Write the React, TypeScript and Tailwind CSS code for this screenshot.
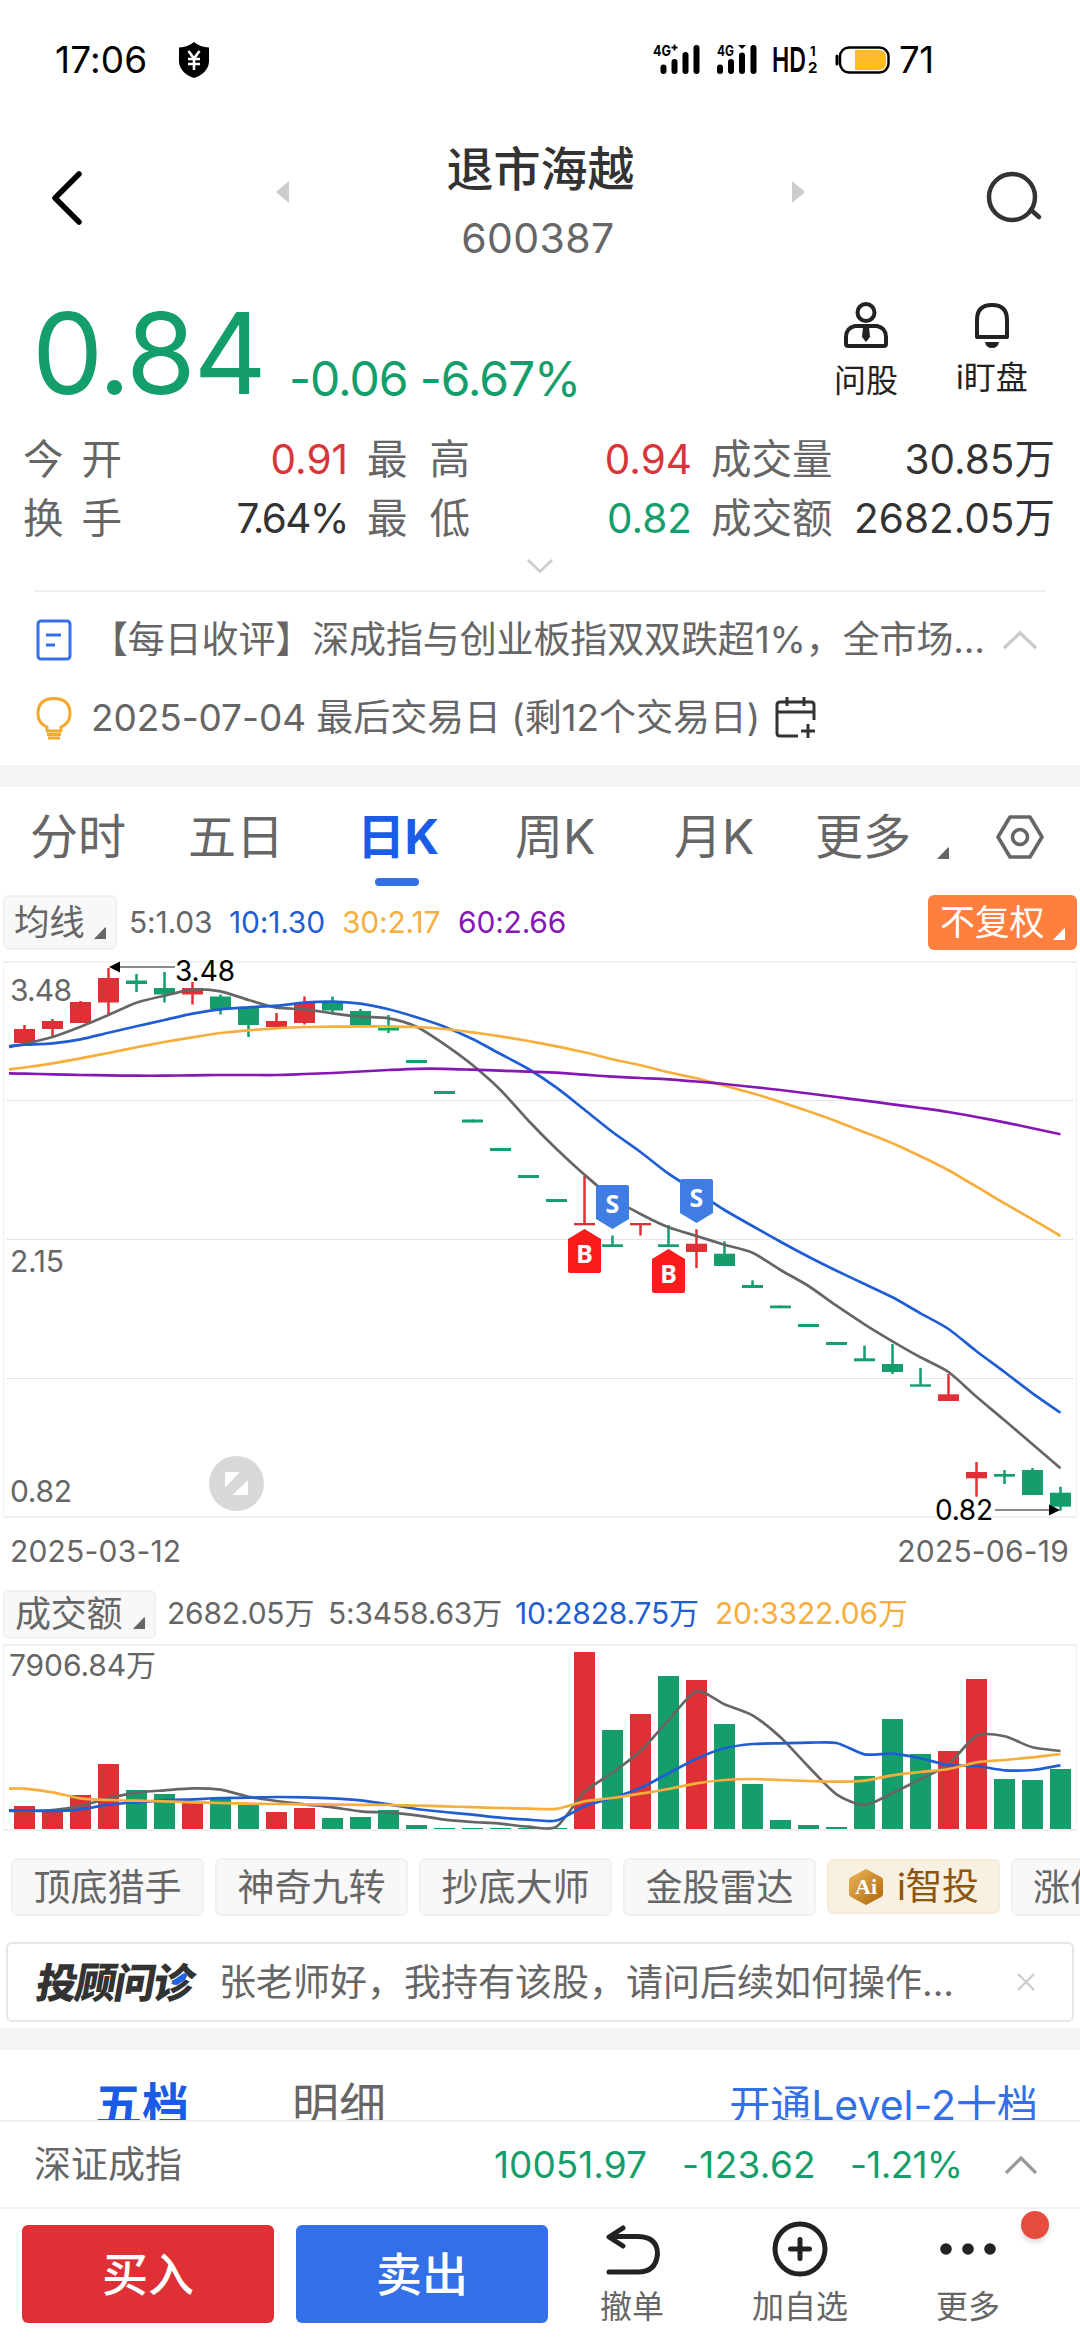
import React from "react";

const RED = "#df3135";
const GREEN = "#149e6b";

type Candle = { up: boolean; hi: number; top: number; bottom: number; lo: number; vol: number };

// [direction, high, body top, body bottom, low, volume top]
const raw: [string, number, number, number, number, number][] = [
    ["r", 1025, 1029, 1043, 1043, 1806],
    ["r", 1019, 1021, 1029, 1037, 1812],
    ["r", 1001, 1002, 1023, 1023, 1795],
    ["r", 968, 978, 1002.5, 1014, 1764],
    ["g", 974, 980.5, 984, 992, 1790],
    ["g", 972, 988, 994.5, 1002.5, 1794],
    ["r", 982, 988, 994.5, 1004.5, 1802],
    ["g", 994.5, 996.5, 1009, 1014.5, 1799],
    ["g", 1007, 1008, 1025, 1037, 1805],
    ["r", 1013, 1021, 1027, 1027, 1812],
    ["r", 996.5, 1003, 1023, 1024.5, 1808],
    ["g", 996.5, 1003, 1010.5, 1012.5, 1818],
    ["g", 1009, 1011, 1025, 1025, 1817],
    ["g", 1015, 1028, 1030.5, 1033, 1810],
    ["g", 1060, 1060, 1063, 1063, 1825],
    ["g", 1091, 1091, 1094, 1094, 1828],
    ["g", 1119.5, 1119.5, 1122.5, 1122.5, 1828],
    ["g", 1148, 1148, 1151, 1151, 1828],
    ["g", 1175, 1175, 1178, 1178, 1828],
    ["g", 1199, 1199, 1202, 1202, 1828],
    ["r", 1176, 1223, 1225.3, 1225, 1652],
    ["g", 1235.5, 1244.3, 1247, 1247, 1730],
    ["r", 1223, 1223, 1225.3, 1235.5, 1714],
    ["g", 1225, 1244.3, 1247, 1247, 1676],
    ["r", 1229.3, 1243.7, 1252, 1268, 1680],
    ["g", 1241.3, 1253.7, 1266, 1266, 1724],
    ["g", 1280.3, 1285, 1288, 1288, 1784],
    ["g", 1305.5, 1305.5, 1308.3, 1308, 1820],
    ["g", 1324, 1324, 1327, 1327, 1825],
    ["g", 1342, 1342, 1345, 1345, 1827],
    ["g", 1345.7, 1358.3, 1361.3, 1361, 1776],
    ["g", 1344, 1364, 1372, 1374, 1719],
    ["g", 1368, 1384.3, 1386.7, 1386, 1754],
    ["r", 1374, 1394.3, 1401, 1401, 1751],
    ["r", 1462, 1472, 1478.3, 1496.7, 1679],
    ["g", 1470, 1474, 1476.7, 1484, 1779],
    ["g", 1468, 1470, 1495, 1495, 1780],
    ["g", 1486.7, 1492.7, 1506.7, 1510.7, 1769],
];

const candles: Candle[] = raw.map(([d, hi, top, bottom, lo, vol]) => ({ up: d === "r", hi, top, bottom, lo, vol }));

const cx = (i: number) => 24.5 + i * 28;

const ma5 = [1044, 1037, 1026.7, 1015, 1002.7, 995.7, 989.7, 991.3, 1000, 1007.7, 1009.3, 1013.3, 1016.7, 1018.3, 1026.7, 1044.3, 1065, 1090, 1120.7, 1149, 1174.7, 1198, 1214, 1227.3, 1236, 1244.7, 1252.7, 1270, 1286, 1305.7, 1324.3, 1341.3, 1357.3, 1372, 1396.7, 1420.3, 1444.3, 1468.3];
const ma10 = [1044.7, 1043.3, 1039.3, 1032.7, 1026.3, 1020, 1013.7, 1009.3, 1007.3, 1005.7, 1002.7, 1001.7, 1003.7, 1009.3, 1017.3, 1026.7, 1039, 1054, 1069, 1087.7, 1109.7, 1132, 1152, 1173.7, 1191.7, 1210, 1226, 1241.7, 1256.7, 1270.7, 1284, 1297.3, 1313.3, 1329, 1351.3, 1372, 1393.3, 1412.7];
const ma30 = [1067.5, 1063.3, 1058.3, 1053, 1047.3, 1042, 1037.3, 1033, 1030.3, 1028.3, 1027, 1026.7, 1026.4, 1026.5, 1027, 1029, 1032.3, 1036.3, 1041, 1046.3, 1052.3, 1059.3, 1065.3, 1072.3, 1078.3, 1085.7, 1093.3, 1102, 1111.3, 1121.3, 1132.3, 1143.3, 1156.3, 1170.3, 1186.7, 1203.3, 1219.3, 1236];
const ma60 = [1073.7, 1074.3, 1075, 1075.4, 1075.7, 1075.7, 1075.3, 1075, 1075, 1075, 1074, 1073, 1071.5, 1070, 1068.8, 1068.8, 1069.7, 1070.7, 1071.7, 1072.7, 1074.7, 1076.7, 1078, 1079.3, 1081.5, 1084, 1087, 1090, 1093.5, 1097, 1100.6, 1104.3, 1108, 1112, 1117, 1122.3, 1128.2, 1134.3];

const vol5 = [1811, 1810, 1806, 1798.3, 1792.7, 1790.3, 1788.3, 1789.7, 1796.7, 1801, 1804.3, 1807.3, 1811.3, 1812.7, 1815.3, 1819.7, 1822, 1823.7, 1826.7, 1826.6, 1792, 1772.7, 1751, 1720.3, 1691.3, 1704.3, 1715.3, 1737.3, 1766.7, 1794.3, 1805, 1793, 1779.3, 1764.3, 1735.7, 1736.3, 1747.3, 1751];
const vol10 = [1810.4, 1811, 1809.3, 1804.7, 1802.3, 1800.3, 1799.3, 1798, 1797.7, 1797, 1797.3, 1798.3, 1800.3, 1804.3, 1809, 1812, 1814.7, 1817.7, 1819.7, 1820.5, 1806.3, 1798, 1788, 1773.3, 1758.7, 1748.3, 1744, 1743.3, 1742.7, 1743, 1754.3, 1753.7, 1758.3, 1765, 1766, 1770.3, 1770, 1765.3];
const vol20 = [1788.7, 1792.3, 1798.3, 1800, 1800.7, 1801.3, 1802.3, 1803, 1803.7, 1804, 1804.3, 1804.6, 1804.8, 1805, 1805.6, 1806.3, 1807.2, 1808, 1808.6, 1808.8, 1801.3, 1798, 1793.7, 1789, 1783.3, 1780, 1779, 1780, 1781, 1781.7, 1780.7, 1775.3, 1772, 1769, 1762.3, 1760, 1757.3, 1754];

// Catmull-Rom through the candle centres, with a short lead-in at the left edge
function linePath(ys: number[], startY: number) {
    const pts = [[9, startY], ...ys.map((y, i) => [cx(i), y])];
    let d = `M${pts[0][0]} ${pts[0][1]}`;
    for (let i = 0; i < pts.length - 1; i++) {
        const p0 = pts[Math.max(i - 1, 0)];
        const p1 = pts[i];
        const p2 = pts[i + 1];
        const p3 = pts[Math.min(i + 2, pts.length - 1)];
        d += `C${p1[0] + (p2[0] - p0[0]) / 8} ${p1[1] + (p2[1] - p0[1]) / 8} ${p2[0] - (p3[0] - p1[0]) / 8} ${p2[1] - (p3[1] - p1[1]) / 8} ${p2[0]} ${p2[1]}`;
    }
    return d;
}

function Line({ ys, start, color }: { ys: number[]; start: number; color: string }) {
    return <path d={linePath(ys, start)} fill="none" stroke={color} strokeWidth="2.7" strokeLinejoin="round" />;
}

function Corner({ className = "" }: { className?: string }) {
    return (
        <svg width="12" height="12" viewBox="0 0 12 12" className={className}>
            <path d="M12 1V12H0.5Q0 12 0.4 11.4L11 0.5Q12 0 12 1Z" fill="currentColor" />
        </svg>
    );
}

function TradeMark({ x, y, side }: { x: number; y: number; side: "B" | "S" }) {
    const buy = side === "B";
    return (
        <g transform={`translate(${x} ${y})`}>
            <path
                d={buy ? "M16.5 0L33 10V42Q33 44 31 44H2Q0 44 0 42V10Z" : "M2 0H31Q33 0 33 2V34L16.5 44L0 34V2Q0 0 2 0Z"}
                fill={buy ? "#fa1c1c" : "#407de3"}
            />
            <text x="16.5" y={buy ? 34 : 28} textAnchor="middle" fontSize="25" fontWeight="700" fill="#fff" className="font-['Noto_Sans',sans-serif]">
                {side}
            </text>
        </g>
    );
}

function StatusBar() {
    return (
        <div className="flex h-[120px] items-center text-black">
            <span className="ml-[55px] w-[124px] text-[37px] tracking-[0.1px]">17:06</span>
            <svg width="30" height="36" viewBox="0 0 30 36">
                <path d="M15 0Q21 5 30 5.500V20Q29 31 15 36Q1 31 0 20V5.500Q9 5 15 0Z" fill="#000" />
                <path d="M9.500 9L15 16.500L20.500 9M9 17H21M9 22H21M15 17V28" stroke="#fff" strokeWidth="2.600" fill="none" />
            </svg>
            <svg width="48" height="34" viewBox="0 -1 48 34" className="ml-[444px] overflow-visible">
                <text x="0" y="11.500" fontSize="14.500" fontWeight="700" textLength="18" lengthAdjust="spacingAndGlyphs">4G</text>
                <path d="M18.500 3.500H24.500M21.500 0.500V6.500" stroke="#000" strokeWidth="1.800" />
                <path d="M10.500 23.500V27M21.500 18V27M32.500 11V27M43.500 4V27" stroke="#000" strokeWidth="6" strokeLinecap="round" />
            </svg>
            <svg width="42" height="34" viewBox="0 -1 42 34" className="ml-[16px] overflow-visible">
                <text x="0" y="11.500" fontSize="14.500" fontWeight="700" textLength="17" lengthAdjust="spacingAndGlyphs">4G</text>
                <path d="M3 23.500V27M14 18V27M25 11.500V27M36.500 4V27" stroke="#000" strokeWidth="6" strokeLinecap="round" />
                <path d="M21 1H29L25 5Z" fill="#000" />
            </svg>
            <svg width="48" height="34" viewBox="0 -1 48 34" className="ml-[13px] overflow-visible">
                <text x="0" y="28" fontSize="34.500" fontWeight="600" textLength="34" lengthAdjust="spacingAndGlyphs">HD</text>
                <text x="38" y="12" fontSize="13" fontWeight="700">1</text>
                <text x="36" y="28.500" fontSize="15" fontWeight="700">2</text>
            </svg>
            <svg width="56" height="28" viewBox="0 0 56 28" className="ml-[14px]">
                <path d="M3 10V18" stroke="#000" strokeWidth="3" strokeLinecap="round" />
                <rect x="6" y="1.500" width="48.500" height="25" rx="9" fill="#fff" stroke="#000" strokeWidth="2.500" />
                <path d="M21 4H45Q52 4 52 11V17Q52 24 45 24H21Z" fill="#fcbc26" />
            </svg>
            <span className="ml-[9px] text-[36.5px] tracking-[-0.5px]">71</span>
        </div>
    );
}

function Header() {
    return (
        <div className="flex h-[155px] items-center">
            <svg width="34" height="56" viewBox="0 0 34 56" className="ml-[50px]">
                <path d="M29 4L5 28L29 52" fill="none" stroke="#000" strokeWidth="5.500" strokeLinecap="round" strokeLinejoin="round" />
            </svg>
            <svg width="13" height="22" viewBox="0 0 13 22" className="-mt-[11px] ml-[192px]">
                <path d="M13 0V22L1 12Q0 11 1 10Z" fill="#ccc" />
            </svg>
            <div className="flex w-[503px] flex-col items-center pt-[7px]">
                <div className="text-[47px] leading-[60px] font-medium text-[#333]">退市海越</div>
                <div className="mt-[14px] mr-[5px] text-[41px] leading-[50px] tracking-[0.4px] text-[#666]">600387</div>
            </div>
            <svg width="13" height="22" viewBox="0 0 13 22" className="-mt-[11px]">
                <path d="M0 0V22L12 12Q13 11 12 10Z" fill="#ccc" />
            </svg>
            <svg width="58" height="54" viewBox="0 0 58 54" className="ml-[181px]">
                <circle cx="26" cy="26" r="23" fill="none" stroke="#333" strokeWidth="4.500" />
                <path d="M45 39L53 46" stroke="#333" strokeWidth="4.500" strokeLinecap="round" />
            </svg>
        </div>
    );
}

function Quote() {
    return (
        <div className="flex h-[155px]">
            <div className="ml-[32px] w-[257px] text-[113px] leading-[156px] tracking-[-2.2px] text-[#149e6b]">0.84</div>
            <div className="flex-1 pt-[79px] text-[48px] leading-[50px] tracking-[-1.1px] whitespace-pre text-[#149e6b]">-0.06 -6.67%</div>
            <div className="flex w-[128px] flex-col items-center pt-[27px] text-[32px] leading-[36px] text-[#222]">
                <svg width="46" height="46" viewBox="0 0 46 46" fill="none" stroke="#222" strokeWidth="4">
                    <circle cx="23" cy="10.500" r="8.500" />
                    <path d="M12 24H34Q43 26 43 35V42Q43 44 41 44H5Q3 44 3 42V35Q3 26 12 24Z" />
                    <path d="M20 25H26L27 35L23 40L19 35Z" fill="#222" stroke="none" />
                </svg>
                <span className="mt-[15px]">问股</span>
            </div>
            <div className="mr-[26px] flex w-[124px] flex-col items-center pt-[27px] text-[32px] leading-[36px] text-[#222]">
                <svg width="38" height="46" viewBox="0 0 38 46" fill="none" stroke="#222" strokeWidth="4">
                    <path d="M4 35V18Q4 3 19 3Q34 3 34 18V35Z" strokeLinejoin="round" />
                    <path d="M12 40H26Q25 46 19 46Q13 46 12 40Z" fill="#222" stroke="none" />
                </svg>
                <span className="mt-[12px]">i盯盘</span>
            </div>
        </div>
    );
}

const stats = [
    [["今", "开", "0.91", "text-[#d8353a]"], ["最", "高", "0.94", "text-[#d8353a]"], ["成交量", "", "30.85万", "text-[#333]"]],
    [["换", "手", "7.64%", "text-[#333] tracking-[-1.6px]"], ["最", "低", "0.82", "text-[#149e6b]"], ["成交额", "", "2682.05万", "text-[#333]"]],
];

function Stats() {
    return (
        <div className="h-[118px] text-[40.5px] leading-[59px]">
            {stats.map((row, r) => (
                <div key={r} className="grid grid-cols-[325px_325px_344px] gap-x-[19px] pl-[23px]">
                    {row.map(([a, b, value, color], c) => (
                        <div key={a + b} className="flex justify-between">
                            <div className={c === 0 ? "flex gap-[18px] text-[#666]" : "flex gap-[22px] text-[#666]"}>
                                <span>{a}</span>
                                {b && <span>{b}</span>}
                            </div>
                            <span className={color}>{value}</span>
                        </div>
                    ))}
                </div>
            ))}
        </div>
    );
}

function News() {
    return (
        <div className="h-[173px] pt-[9px] text-[37px] leading-[78px] text-[#666]">
            <div className="flex h-[78px] items-center">
                <svg width="36" height="42" viewBox="0 0 36 42" fill="none" stroke="#3370e7" strokeWidth="3" className="ml-[36px]">
                    <rect x="2" y="2" width="32" height="38" rx="3" />
                    <path d="M10 16H25M10 26H19" />
                </svg>
                <span className="ml-[19px] w-[905px] tracking-[-0.13px] whitespace-nowrap">【每日收评】深成指与创业板指双双跌超1%，全市场...</span>
                <svg width="36" height="22" viewBox="0 0 36 22" className="ml-[6px]">
                    <path d="M2 19L18 4L34 19" fill="none" stroke="#ccc" strokeWidth="3.500" />
                </svg>
            </div>
            <div className="flex h-[78px] items-center">
                <svg width="38" height="44" viewBox="0 0 38 44" fill="none" stroke="#f5a92c" strokeWidth="3" className="ml-[35px]">
                    <path d="M12 35V31Q3 27 3 18Q3 2.500 19 2.500Q35 2.500 35 18Q35 27 26 31V35Z" strokeLinejoin="round" />
                    <path d="M12 38.500H26M13 42H25" />
                </svg>
                <span className="ml-[18px] tracking-[-0.08px] whitespace-pre">2025-07-04 最后交易日 (剩12个交易日)</span>
                <svg width="42" height="44" viewBox="0 0 42 44" fill="none" stroke="#333" strokeWidth="3" className="ml-[15px]">
                    <path d="M39 24V9Q39 6 36 6H5Q2 6 2 9V37Q2 40 5 40H23M2 16H39M12 1V10M29 1V10M33 28V42M26 35H40" />
                </svg>
            </div>
        </div>
    );
}

function PeriodTabs() {
    return (
        <div className="relative flex h-[100px] items-center pl-[30px] text-[48px] leading-none text-[#666]">
            <span className="w-[158px]">分时</span>
            <span className="w-[169px]">五日</span>
            <span className="w-[158px] font-bold tracking-[-0.5px] text-[#1a5ce5]">日K</span>
            <span className="w-[159px]">周K</span>
            <span className="w-[141px]">月K</span>
            <span>更多</span>
            <Corner className="mt-[32px] ml-[26px]" />
            <svg width="48" height="44" viewBox="0 0 48 44" fill="none" stroke="#666" strokeWidth="3.600" className="ml-[47px]">
                <path d="M14 2H34L46 22L34 42H14L2 22Z" strokeLinejoin="round" />
                <circle cx="24" cy="22" r="7.500" />
            </svg>
            <div className="absolute top-[91px] left-[375px] h-2 w-[44px] rounded-full bg-[#3370e7]" />
        </div>
    );
}

function MaRow() {
    return (
        <div className="flex h-[71px] items-start pt-2 text-[30px] leading-[55px] tracking-[-0.2px]">
            <div className="ml-[3px] flex h-[55px] w-[114px] items-center rounded-md border-2 border-[#f1f1f1] bg-[#f8f8f8] pl-[9px] text-[35.5px] text-[#666]">
                均线
                <Corner className="mt-[20px] ml-[9px]" />
            </div>
            <span className="ml-[12px] w-[100px] text-[#666]">5:1.03</span>
            <span className="w-[113px] text-[#1f5ed2]">10:1.30</span>
            <span className="w-[116px] text-[#f6ae3d]">30:2.17</span>
            <span className="text-[#8617b4]">60:2.66</span>
            <div className="mr-[3px] ml-auto flex h-[55px] w-[149px] items-center rounded-md bg-[#ff7f3f] pl-[12px] text-[35px] text-white">
                不复权
                <Corner className="mt-[22px] ml-[9px]" />
            </div>
        </div>
    );
}

function KChart() {
    return (
        <svg width="1080" height="566" viewBox="0 958 1080 566" className="block font-['Inter',sans-serif]">
            <path d="M3 962H1077M3 1517H1077" stroke="#f1f1f1" strokeWidth="2" />
            <path d="M3.500 962V1517M1076.500 962V1517" stroke="#f1f1f1" />
            <path d="M6 1100.500H1074M6 1239.500H1074M6 1378.500H1074" stroke="#e6e6e6" />
            {candles.map((c, i) => (
                <g key={i} fill={c.up ? RED : GREEN}>
                    <rect x={cx(i) - 1.25} y={c.hi} width="2.5" height={c.lo - c.hi} />
                    <rect x={cx(i) - 10.5} y={c.top} width="21" height={c.bottom - c.top} />
                </g>
            ))}
            <g fontSize="30" fill="#666">
                <text x="10" y="1001" textLength="62">3.48</text>
                <text x="10" y="1272" textLength="54">2.15</text>
                <text x="10" y="1502" textLength="62">0.82</text>
            </g>
            <Line ys={ma5} start={1047} color="#666" />
            <Line ys={ma10} start={1046} color="#1f5ed2" />
            <Line ys={ma30} start={1069.3} color="#f6ae3d" />
            <Line ys={ma60} start={1073.3} color="#8617b4" />
            <path d="M118 967H175M995 1510H1050" stroke="#666" strokeWidth="1.500" />
            <path d="M109 967L120 961.500V972.500ZM1060 1510L1049 1504.500V1515.500Z" fill="#000" />
            <g fontSize="28" fill="#000">
                <text x="175" y="981" textLength="60">3.48</text>
                <text x="935" y="1520" textLength="58">0.82</text>
            </g>
            <TradeMark x={568} y={1229} side="B" />
            <TradeMark x={596} y={1185} side="S" />
            <TradeMark x={652} y={1249} side="B" />
            <TradeMark x={680} y={1179} side="S" />
            <circle cx="236.500" cy="1483.500" r="27.500" fill="#d8d8d8" />
            <path d="M226 1472.500H239L225.500 1486.500V1473ZM247.500 1481V1494.500H233.500Z" fill="#fff" stroke="#fff" strokeLinejoin="round" />
        </svg>
    );
}

function VolumeHeader() {
    return (
        <div className="flex h-[64px] items-start pt-[12px] text-[30px] leading-[47px] tracking-[-0.2px] text-[#666]">
            <div className="ml-[3px] flex h-[49px] w-[153px] items-center rounded-md border-2 border-[#f1f1f1] bg-[#f8f8f8] pl-[10px] text-[36px]">
                成交额
                <Corner className="mt-[16px] ml-[11px]" />
            </div>
            <span className="ml-[11px] w-[161px]">2682.05万</span>
            <span className="w-[187px]">5:3458.63万</span>
            <span className="w-[200px] text-[#1f5ed2]">10:2828.75万</span>
            <span className="text-[#f6ae3d]">20:3322.06万</span>
        </div>
    );
}

function VolumeChart() {
    return (
        <svg width="1080" height="192" viewBox="0 1642 1080 192" className="block font-['Inter','Noto_Sans_CJK_SC',sans-serif]">
            <path d="M3 1645H1077M3 1830H1077" stroke="#f1f1f1" strokeWidth="2" />
            <path d="M3.500 1645V1830M1076.500 1645V1830" stroke="#f1f1f1" />
            {candles.map((c, i) => (
                <rect key={i} x={cx(i) - 10.5} y={c.vol} width="21" height={1829 - c.vol} fill={c.up ? RED : GREEN} />
            ))}
            <text x="9" y="1676" fontSize="30" fill="#666" textLength="147">7906.84万</text>
            <Line ys={vol5} start={1811} color="#666" />
            <Line ys={vol10} start={1810.3} color="#1f5ed2" />
            <Line ys={vol20} start={1788.7} color="#f6ae3d" />
        </svg>
    );
}

function Strategies() {
    return (
        <div className="flex h-[108px] w-[1080px] gap-[11px] overflow-hidden pt-[24px] pl-[11px] text-[37px] leading-[56px] text-[#666]">
            {["顶底猎手", "神奇九转", "抄底大师", "金股雷达"].map((name) => (
                <div key={name} className="h-[58px] w-[193px] shrink-0 rounded-md border-2 border-[#f1f1f1] bg-[#f8f8f8] text-center">
                    {name}
                </div>
            ))}
            <div className="mt-px flex h-[55px] w-[173px] shrink-0 items-center rounded-md border-2 border-[#f6ead8] bg-[#f8f1e1] pl-[18px] text-[#8c5510]">
                <svg width="38" height="38" viewBox="0 0 38 38">
                    <defs>
                        <linearGradient id="gold" x1="0" y1="0" x2="1" y2="1">
                            <stop offset="0" stopColor="#eeb75b" />
                            <stop offset="1" stopColor="#ad6507" />
                        </linearGradient>
                    </defs>
                    <path d="M19 1L34 9Q36 10 36 12V26Q36 28 34 29L19 37L4 29Q2 28 2 26V12Q2 10 4 9Z" fill="url(#gold)" />
                    <text x="19" y="26" textAnchor="middle" fontSize="22" fontWeight="700" fill="#fff" className="font-['Liberation_Serif',serif]">Ai</text>
                </svg>
                <span className="mt-px ml-[12px] tracking-[-0.5px]">i智投</span>
            </div>
            <div className="h-[58px] w-[193px] shrink-0 rounded-md border-2 border-[#f1f1f1] bg-[#f8f8f8] pl-[20px]">涨停分析</div>
        </div>
    );
}

function Advisor() {
    return (
        <div className="mx-[6px] mb-[6px] flex h-[80px] items-center rounded-md border-2 border-[#e6e6e6] text-[37px] leading-none text-[#666]">
            <svg width="162" height="44" viewBox="0 0 162 44" className="ml-[26px] overflow-visible">
                <text x="7" y="38" fontSize="41" fontWeight="900" fill="#333" textLength="158" transform="skewX(-10)" className="font-['Noto_Sans_CJK_SC',sans-serif]">
                    投顾问诊
                </text>
                <path d="M137 24L140 20L150 13L154 14L151 20L143 25Z" fill="#1f62f0" />
            </svg>
            <span className="ml-[23px] w-[781px] whitespace-nowrap">张老师好，我持有该股，请问后续如何操作...</span>
            <svg width="18" height="18" viewBox="0 0 18 18" className="ml-[17px]">
                <path d="M1 1L17 17M17 1L1 17" stroke="#ccc" strokeWidth="2.200" />
            </svg>
        </div>
    );
}

function LevelTabs() {
    return (
        <div className="flex h-[70px] overflow-hidden pt-[25px] text-[47px] leading-[60px] whitespace-nowrap text-[#666]">
            <span className="ml-[95px] w-[197px] font-bold text-[#1a5ce5]">五档</span>
            <span>明细</span>
            <span className="mr-[42px] ml-auto text-[41px] text-[#3370e7]">开通Level-2十档</span>
        </div>
    );
}

function IndexBar() {
    return (
        <div className="flex h-[87px] items-center border-t-2 border-[#f1f1f1] pl-[34px] text-[37px] leading-none text-[#149e6b]">
            <span className="text-[#666]">深证成指</span>
            <span className="ml-auto w-[188px]">10051.97</span>
            <span className="w-[168px] tracking-[0.3px]">-123.62</span>
            <span className="w-[154px] tracking-[-0.7px]">-1.21%</span>
            <svg width="34" height="20" viewBox="0 0 34 20" className="mr-[42px]">
                <path d="M2 18L17 3L32 18" fill="none" stroke="#999" strokeWidth="3.200" />
            </svg>
        </div>
    );
}

function TradeBar() {
    return (
        <div className="relative flex h-[133px] border-t-2 border-[#f1f1f1] pt-[16px] pl-[22px] text-[32px] leading-[36px] text-[#666]">
            <button className="h-[98px] w-[252px] rounded-md bg-[#df3135] text-[46px] font-medium text-white">买入</button>
            <button className="ml-[22px] h-[98px] w-[252px] rounded-md bg-[#3370e7] text-[46px] font-medium text-white">卖出</button>
            <div className="flex w-[168px] flex-col items-center">
                <svg width="58" height="54" viewBox="0 2 58 54" fill="none" stroke="#222" strokeWidth="5" strokeLinecap="round" strokeLinejoin="round">
                    <path d="M20 5L6 14L20 23M7 13.500H35Q54.500 14 54.500 31Q53 49 35 49H6" />
                </svg>
                <span className="mt-[10px]">撤单</span>
            </div>
            <div className="flex w-[168px] flex-col items-center">
                <svg width="56" height="56" viewBox="0 0 56 56" fill="none" stroke="#222" strokeWidth="5" className="-mt-[4px]">
                    <circle cx="28" cy="28" r="25" />
                    <path d="M28 18.500V37.500M18.500 28H37.500" strokeLinecap="round" />
                </svg>
                <span className="mt-[12px]">加自选</span>
            </div>
            <div className="flex w-[168px] flex-col items-center">
                <svg width="60" height="54" viewBox="0 0 60 54" fill="#222">
                    <circle cx="8" cy="24" r="5.800" />
                    <circle cx="30" cy="24" r="5.800" />
                    <circle cx="52" cy="24" r="5.800" />
                </svg>
                <span className="mt-[10px]">更多</span>
            </div>
            <div className="absolute top-[2px] left-[1021px] h-[28px] w-[28px] rounded-full bg-[#e74c3f] shadow-[0_4px_4px_rgba(0,0,0,0.12)]" />
        </div>
    );
}

export default function App() {
    return (
        <div className="h-[2340px] w-[1080px] overflow-hidden bg-white font-['Inter','Noto_Sans_CJK_SC',sans-serif]">
            <StatusBar />
            <Header />
            <Quote />
            <Stats />
            <div className="mx-[34px] flex h-[44px] justify-center border-b-2 border-[#f1f1f1] pt-[10px]">
                <svg width="28" height="16" viewBox="0 0 28 16">
                    <path d="M2 2L14 13.500L26 2" fill="none" stroke="#ccc" strokeWidth="2.600" />
                </svg>
            </div>
            <News />
            <div className="h-[22px] bg-[#f4f4f4]" />
            <PeriodTabs />
            <MaRow />
            <KChart />
            <div className="flex h-[54px] justify-between pr-[11px] pl-[10px] text-[30px] leading-[54px] tracking-[0.2px] text-[#666]">
                <span>2025-03-12</span>
                <span>2025-06-19</span>
            </div>
            <VolumeHeader />
            <VolumeChart />
            <Strategies />
            <Advisor />
            <div className="h-[22px] bg-[#f4f4f4]" />
            <LevelTabs />
            <IndexBar />
            <TradeBar />
        </div>
    );
}
